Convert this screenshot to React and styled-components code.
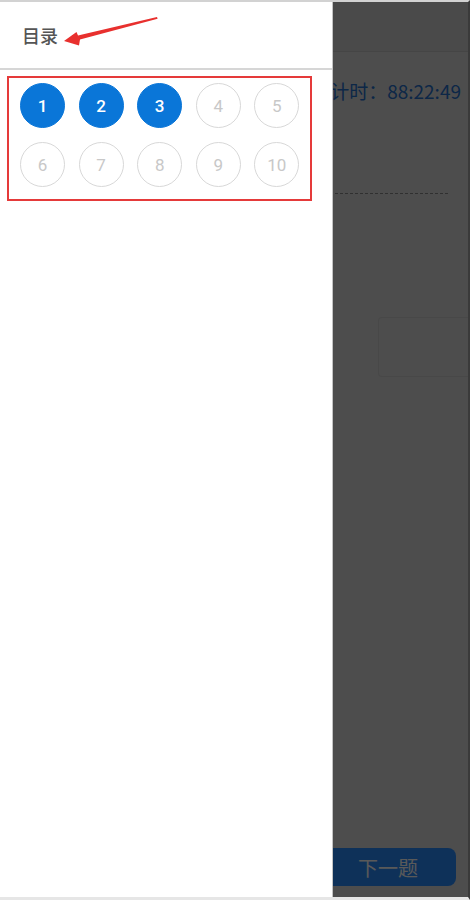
import React from 'react';
import styled, { createGlobalStyle } from 'styled-components';

const GlobalStyle = createGlobalStyle`
  html, body {
    margin: 0;
    padding: 0;
    background: #fff;
  }
  body {
    font-family: Roboto, "Noto Sans CJK SC", "Noto Sans", sans-serif;
  }
  * {
    box-sizing: border-box;
  }
`;

const questions = [1, 2, 3, 4, 5, 6, 7, 8, 9, 10];
const answered = [1, 2, 3];

const App = () => {
  return (
    <>
      <GlobalStyle />
      <Frame>
        <Stage>
          <QuizPage>
            <TopBar />
            <TimerRow>倒计时：88:22:49</TimerRow>
            <Dashed />
            <AnswerBox />
            <Spacer />
            <Footer>
              <NextBtn>下一题</NextBtn>
            </Footer>
          </QuizPage>

          <Mask />

          <Drawer>
            <DrawerHeader>
              <Title>目录</Title>
              <Arrow viewBox='0 0 170 60' aria-hidden='true'>
                <polygon points='64,39 76.5,30 78,33.5 157,15 157.6,16.8 80,37.6 79,43.5' />
              </Arrow>
            </DrawerHeader>
            <Marked>
              <NumGrid>
                {questions.map((n) => (
                  <NumBtn key={n} done={answered.includes(n)}>
                    {n}
                  </NumBtn>
                ))}
              </NumGrid>
            </Marked>
          </Drawer>
        </Stage>
      </Frame>
    </>
  );
};

export default App;

const Frame = styled.div`
  width: 470px;
  height: 900px;
  border-top: 2px solid #d2d2d2;
  border-bottom: 3px solid #e6e6e6;
  border-right: 2px solid #3a3a3a;
  overflow: hidden;
`;

const Stage = styled.div`
  position: relative;
  height: 100%;
`;

const QuizPage = styled.div`
  height: 100%;
  background: #dcdcdc;
  display: flex;
  flex-direction: column;
`;

const TopBar = styled.div`
  height: 50px;
  background: #d4d4d4;
  border-bottom: 1px solid #c6c6c6;
`;

const TimerRow = styled.div`
  display: flex;
  justify-content: flex-end;
  padding: 27px 7px 0 0;
  font-family: "Noto Sans CJK SC", sans-serif;
  font-size: 19px;
  line-height: 24px;
  color: #2570cc;
`;

const Dashed = styled.div`
  margin: 90px 20px 0 0;
  border-top: 1px dashed #8a8a8a;
`;

const AnswerBox = styled.div`
  align-self: flex-end;
  width: 90px;
  height: 60px;
  margin-top: 123px;
  border: 1px solid #cdcdcd;
  border-right: 0;
  border-radius: 4px 0 0 4px;
`;

const Spacer = styled.div`
  flex: 1;
`;

const Footer = styled.div`
  display: flex;
  justify-content: flex-end;
  padding: 0 12px 11px 0;
`;

const NextBtn = styled.button`
  width: 136px;
  height: 38px;
  border: 0;
  border-radius: 8px;
  background: #2a8cff;
  color: #fff;
  font-family: "Noto Sans CJK SC", sans-serif;
  font-size: 20px;
`;

const Mask = styled.div`
  position: absolute;
  inset: 0;
  background: rgba(0, 0, 0, 0.65);
`;

const Drawer = styled.aside`
  position: absolute;
  top: 0;
  left: 0;
  bottom: 0;
  width: 333px;
  background: #fff;
  border-right: 1px solid #c4c4c4;
`;

const DrawerHeader = styled.div`
  position: relative;
  height: 68px;
  display: flex;
  align-items: center;
  padding-left: 22px;
  border-bottom: 2px solid #d6d6d6;
`;

const Title = styled.span`
  font-family: "Noto Sans CJK SC", sans-serif;
  font-size: 18px;
  font-weight: 500;
  color: #555;
`;

const Arrow = styled.svg`
  position: absolute;
  left: 0;
  top: 0;
  width: 170px;
  height: 60px;
  fill: #e8302e;
`;

const Marked = styled.div`
  width: 305px;
  margin: 6px 0 0 7px;
  border: 2px solid #e53a3a;
  padding: 5px 10px 12px 11px;
`;

const NumGrid = styled.div`
  display: grid;
  grid-template-columns: repeat(5, 45px);
  column-gap: 13.6px;
  row-gap: 14.4px;
`;

const NumBtn = styled.div`
  width: 45px;
  height: 45px;
  border-radius: 50%;
  display: flex;
  align-items: center;
  justify-content: center;
  font-size: 17px;
  font-weight: ${(p) => (p.done ? 500 : 400)};
  color: ${(p) => (p.done ? '#fff' : '#c8c8c8')};
  background: ${(p) => (p.done ? '#0a76d8' : '#fff')};
  border: 1.5px solid ${(p) => (p.done ? '#0a76d8' : '#d8d8d8')};
`;
